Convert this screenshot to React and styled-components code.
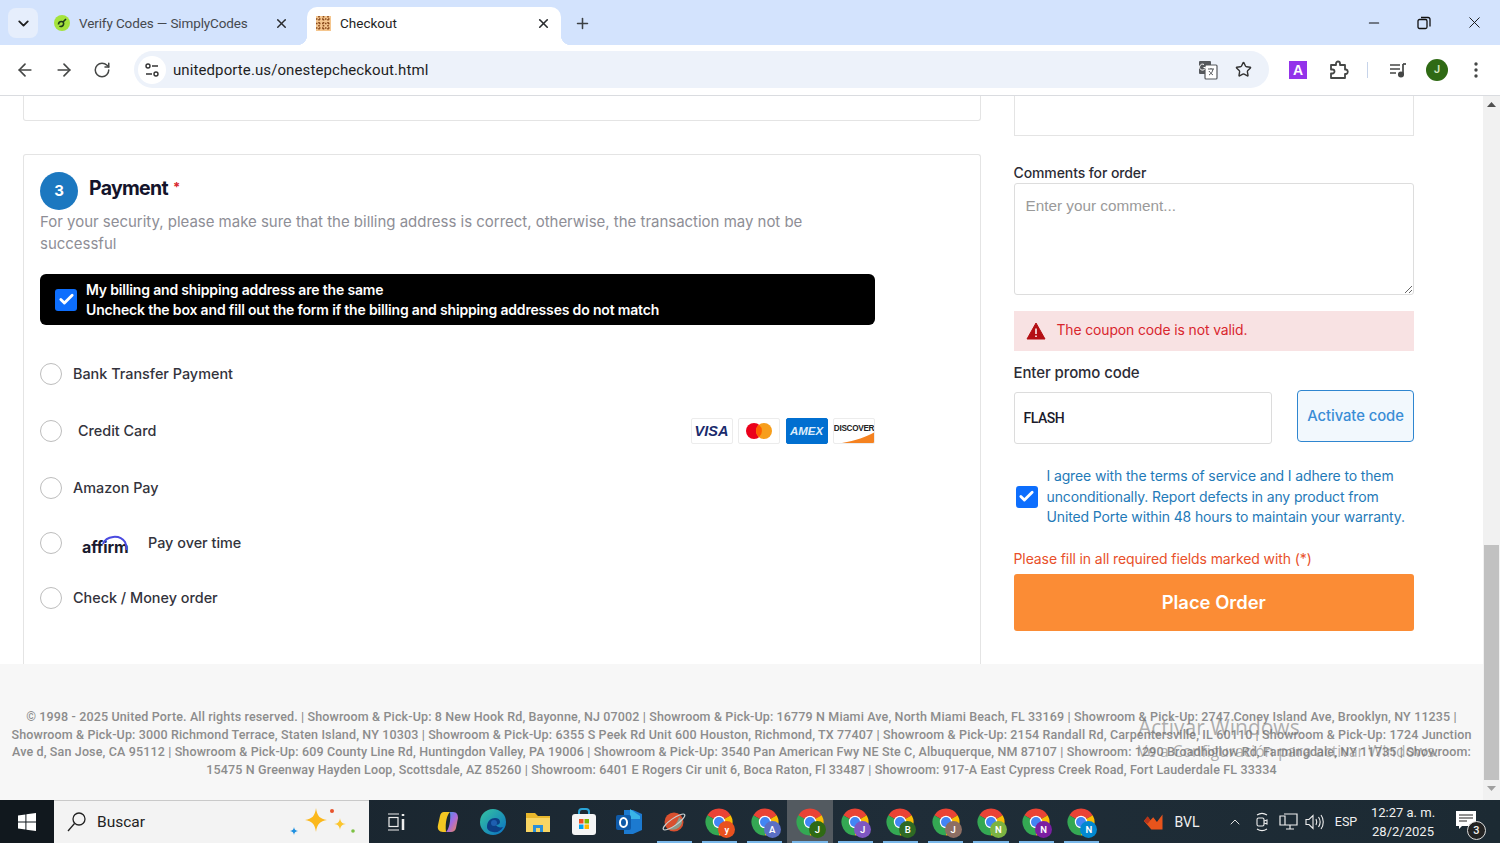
import React from "react";
import styled, { createGlobalStyle } from "styled-components";
import { ArrowLeft, ArrowRight, RotateCw, Star, X, Plus, ChevronDown, Minus, Check, ChevronUp } from "lucide-react";

const Global = createGlobalStyle`
  html, body { margin: 0; padding: 0; height: 100%; overflow: hidden; background: #fff; }
  body { font-family: "Inter", "Liberation Sans", sans-serif; }
  * { box-sizing: border-box; }
`;
const Screen = styled.div`width:1500px;height:843px;display:flex;flex-direction:column;position:relative;overflow:hidden;`;

/* ---- tab strip ---- */
const TabStrip = styled.div`height:45px;background:#d3e3fd;display:flex;align-items:flex-end;padding-left:8px;position:relative;flex:none;`;
const TabMenu = styled.div`width:30px;height:30px;border-radius:8px;background:#e6eefc;display:flex;align-items:center;justify-content:center;margin-bottom:7px;color:#1f1f1f;`;
const Tab = styled.div`
  height:38px;padding-bottom:6px;display:flex;align-items:center;flex:none;position:relative;width:${p=>p.$w}px;margin-left:${p=>p.$ml}px;padding-left:${p=>p.$pl}px;
  border-radius:10px 10px 0 0;background:${p=>p.$active?"#fff":"transparent"};color:${p=>p.$active?"#1f1f1f":"#45494f"};
  font:13.5px "Roboto","Liberation Sans",sans-serif;
  ${p=>p.$active?`
    &::before,&::after{content:"";position:absolute;bottom:0;width:10px;height:10px;}
    &::before{left:-10px;background:radial-gradient(circle at 0 0,transparent 10px,#fff 10.5px);}
    &::after{right:-10px;background:radial-gradient(circle at 100% 0,transparent 10px,#fff 10.5px);}
  `:""}
`;
const TabTitle = styled.span`flex:1;margin-left:${p=>p.$ml}px;white-space:nowrap;letter-spacing:${p=>p.$ls||0}px;`;
const TabClose = styled.span`display:flex;margin-right:${p=>p.$mr}px;color:#2a2c2f;`;
const NewTab = styled.div`display:flex;margin:0 0 13px 13px;color:#3c4043;`;
const WinControls = styled.div`margin-left:auto;display:flex;align-self:stretch;align-items:center;color:#111;`;
const WinBtn = styled.div`width:50.5px;display:flex;justify-content:center;`;

/* ---- toolbar ---- */
const Toolbar = styled.div`height:51px;background:#fff;border-radius:9px 9px 0 0;border-bottom:1px solid #dadce0;display:flex;align-items:center;padding:0 0 1px 15px;flex:none;color:#454746;`;
const NavBtn = styled.div`width:39px;display:flex;`;
const Omnibox = styled.div`height:37px;width:1135px;margin-left:2px;background:#edf2fa;border-radius:19px;display:flex;align-items:center;padding:0 17px 0 4px;`;
const SiteIcon = styled.div`width:28px;height:28px;border-radius:50%;background:#fff;display:flex;align-items:center;justify-content:center;`;
const Url = styled.span`margin-left:7px;padding-top:1px;font:15px "Roboto","Liberation Sans",sans-serif;color:#1f1f1f;flex:1;letter-spacing:.1px;`;
const OmniIcon = styled.div`display:flex;margin-left:${p=>p.$ml||0}px;`;
const ToolIcon = styled.div`display:flex;align-items:center;justify-content:center;width:${p=>p.$w}px;margin-left:${p=>p.$ml||0}px;`;
const Ext = styled.div`width:18px;height:18px;background:#9333ea;color:#fff;font:700 14px/18px "Liberation Sans",sans-serif;text-align:center;`;
const Sep = styled.div`width:1px;height:16px;background:#c7d4ea;flex:none;`;
const Avatar = styled.div`width:22px;height:22px;border-radius:50%;background:#2f6a14;color:#cfe5c0;font:600 11px/22px "Roboto",sans-serif;text-align:center;`;

/* ---- page ---- */
const Viewport = styled.div`height:704px;display:flex;flex:none;position:relative;`;
const Page = styled.div`flex:1;display:flex;flex-direction:column;min-width:0;`;
const Main = styled.div`height:568px;display:flex;padding-left:23px;background:#fff;`;
const LeftCol = styled.div`width:958px;display:flex;flex-direction:column;`;
const RightCol = styled.div`width:400.5px;margin-left:32.5px;display:flex;flex-direction:column;`;
const TopStub = styled.div`height:25px;border:1px solid #e4e4e4;border-top:none;border-radius:0 0 3px 3px;margin-bottom:33px;flex:none;`;
const Card = styled.div`flex:1;border:1px solid #e4e4e4;border-bottom:none;border-radius:3px 3px 0 0;padding:17px 16px 0;`;
const StepHead = styled.div`display:flex;align-items:flex-start;`;
const StepBadge = styled.div`width:38px;height:38px;border-radius:50%;background:#1c78c0;color:#fff;font:700 15px/38px "Inter",sans-serif;text-align:center;`;
const StepTitle = styled.h2`margin:1px 0 0 11px;font:700 19.5px/28px "Inter",sans-serif;color:#14142b;letter-spacing:-.7px;`;
const Req = styled.span`color:#d8262e;font-size:13px;margin-left:5px;vertical-align:3px;`;
const Hint = styled.p`margin:1px 0 0;width:800px;font:15px/22px "Inter",sans-serif;color:#8e8e96;letter-spacing:-.02px;`;
const BlackBox = styled.div`margin-top:19px;width:835px;height:51px;background:#000;border-radius:6px;display:flex;align-items:center;padding:0 0 0 15px;color:#fff;font:600 14px/20px "Inter",sans-serif;letter-spacing:-.17px;`;
const CheckBox = styled.span`width:22px;height:22px;flex:none;border-radius:3px;background:#0d6efd;display:flex;align-items:center;justify-content:center;color:#fff;`;
const BoxText = styled.div`margin-left:9px;`;
const Methods = styled.div`display:flex;flex-direction:column;margin-top:38px;`;
const Method = styled.div`display:flex;align-items:center;height:22px;margin-top:${p=>p.$mt||0}px;width:835px;font:500 14.4px/22px "Inter",sans-serif;color:#33333c;`;
const Radio = styled.span`width:22px;height:22px;border-radius:50%;border:1px solid #bdbdbd;background:#fff;flex:none;`;
const MethodLabel = styled.span`margin-left:${p=>p.$ml}px;position:relative;top:-.5px;`;
const AffirmLogo = styled.span`margin-left:20px;width:48px;height:22px;position:relative;display:block;`;
const AffirmWord = styled.span`position:absolute;left:0;bottom:-2px;font:700 16px/18px "Inter",sans-serif;color:#1a1a2e;letter-spacing:-.1px;`;
const AffirmArc = styled.svg`position:absolute;right:-1px;top:1px;`;
const Cards = styled.div`margin-left:auto;display:flex;gap:5.5px;`;
const PayCard = styled.div`
  width:42px;height:26px;border:1px solid ${p=>p.$bg?p.$bg:"#ececec"};border-radius:2px;background:${p=>p.$bg||"#fff"};
  display:flex;align-items:center;justify-content:center;position:relative;overflow:hidden;
`;
const VisaText = styled.span`font:italic 800 14.5px "Liberation Sans",sans-serif;color:#1a2a6c;`;
const AmexText = styled.span`font:italic 800 11.5px "Liberation Sans",sans-serif;color:#dcecfb;letter-spacing:0;`;
const DiscText = styled.span`font:700 8.2px "Liberation Sans",sans-serif;color:#222;position:relative;top:-3px;letter-spacing:-.3px;`;
const DiscSwoosh = styled.svg`position:absolute;left:0;bottom:0;`;

/* right col */
const RightStub = styled.div`height:40px;border:1px solid #e4e4e4;border-top:none;flex:none;`;
const Label = styled.label`display:block;font:500 ${p=>p.$fs}px/18px "Inter",sans-serif;color:#2c2c35;letter-spacing:${p=>p.$ls}px;margin-top:${p=>p.$mt}px;`;
const Comment = styled.textarea`
  display:block;margin-top:1px;width:400px;height:112px;border:1px solid #ddd;border-radius:3px;padding:13px 11px;font:15.3px "Liberation Sans",sans-serif;outline:none;
  &::placeholder{color:#9a9a9a;}
`;
const Alert = styled.div`margin-top:16px;height:40px;background:#f8e2e3;display:flex;align-items:center;padding-left:12px;color:#d8262e;font:13.9px "Inter",sans-serif;letter-spacing:-.1px;`;
const AlertText = styled.span`margin-left:11px;position:relative;top:-1px;`;
const PromoRow = styled.div`display:flex;justify-content:space-between;align-items:flex-start;margin-top:8px;`;
const PromoInput = styled.div`margin-top:2px;width:258px;height:52px;border:1px solid #dcdcdc;border-radius:3px;padding-left:9px;display:flex;align-items:center;font:500 14px "Roboto",sans-serif;color:#1b1b2b;letter-spacing:-.5px;`;
const ActivateBtn = styled.div`width:117px;height:52px;border:1px solid #2f86d0;border-radius:4px;background:#f2f8fd;color:#3a8dd6;font:500 14.8px/50px "Inter",sans-serif;text-align:center;letter-spacing:-.05px;white-space:nowrap;`;
const Terms = styled.div`margin-top:22px;display:flex;align-items:center;padding-left:2px;color:#1f7ab8;font:14px/20.5px "Inter",sans-serif;letter-spacing:-.13px;`;
const TermsText = styled.div`margin-left:9px;white-space:nowrap;`;
const Required = styled.div`margin-top:22px;color:#e8502a;font:14px/18px "Inter",sans-serif;letter-spacing:-.1px;`;
const PlaceOrder = styled.div`margin-top:6px;height:57px;border-radius:3px;background:#fb8c35;color:#fff;font:600 18.4px/57px "Inter",sans-serif;text-align:center;`;

/* footer */
const Footer = styled.footer`height:136px;background:#f7f7f7;padding-top:44px;text-align:center;color:#8c8c8c;font:500 12.5px/17.5px "Roboto","Liberation Sans",sans-serif;letter-spacing:.14px;`;
const FooterLine = styled.div`white-space:nowrap;`;
const Watermark = styled.div`position:absolute;left:1138px;top:617px;color:rgba(110,110,110,.55);font:21px "Open Sans",sans-serif;pointer-events:none;`;
const WatermarkSub = styled.div`font-size:15.6px;margin-top:-1px;`;

/* scrollbar */
const Scrollbar = styled.div`width:17px;background:#f1f1f1;display:flex;flex-direction:column;align-items:stretch;flex:none;`;
const ScrollArrow = styled.div`height:17px;display:flex;align-items:center;justify-content:center;`;
const ScrollGap = styled.div`height:432px;`;
const ScrollThumb = styled.div`height:235px;background:#c1c1c1;margin:0 1px;`;

/* taskbar */
const Taskbar = styled.div`height:43px;background:linear-gradient(90deg,#17222b,#1f2d38 60%,#1c2a33);display:flex;align-items:stretch;flex:none;color:#eee;`;
const StartBtn = styled.div`width:54px;display:flex;align-items:center;justify-content:center;background:#11181e;`;
const SearchBox = styled.div`width:315px;background:#f3f3f3;border-top:1px solid #c9c9c9;display:flex;align-items:center;padding-left:13px;color:#222;font:15.5px "Roboto",sans-serif;position:relative;`;
const SearchText = styled.span`margin-left:10px;`;
const SearchDeco = styled.svg`position:absolute;right:8px;top:4px;`;
const TaskIcons = styled.div`display:flex;margin-left:5px;`;
const TaskItem = styled.div`
  width:45.25px;display:flex;align-items:center;justify-content:center;position:relative;margin-right:${p=>p.$mr||0}px;
  background:${p=>p.$active?"#535a60":"transparent"};
  &::after{content:"";position:absolute;left:5px;right:5px;bottom:0;height:2px;background:${p=>p.$run?"#7ab8ea":"transparent"};}
`;
const ChromeWrap = styled.div`width:28px;height:28px;position:relative;`;
const ChromeBadge = styled.span`position:absolute;right:-2px;bottom:-2px;width:17px;height:17px;border-radius:50%;background:${p=>p.$bg};color:#fff;font:600 9.5px/17px "Roboto",sans-serif;text-align:center;`;
const Tray = styled.div`margin-left:auto;display:flex;align-items:center;font:14px "Roboto",sans-serif;color:#f0f0f0;`;
const TrayItem = styled.div`display:flex;align-items:center;justify-content:center;width:${p=>p.$w}px;margin-left:${p=>p.$ml||0}px;font-size:${p=>p.$fs||14}px;`;
const Clock = styled.div`text-align:center;font:13px/19px "Roboto",sans-serif;width:72px;margin-left:6px;`;
const Notif = styled.div`position:relative;width:26px;height:24px;margin-left:17px;margin-right:18px;`;
const NotifBadge = styled.span`position:absolute;right:-4px;bottom:-6px;width:19px;height:19px;border-radius:50%;border:1px solid #ddd;background:#222;color:#eee;font:500 11px/17px "Roboto",sans-serif;text-align:center;`;

const Tick = () => <Check size={17} strokeWidth={4} />;

const Chrome = ({ badge, bg }) => (
  <ChromeWrap>
    <svg width="28" height="28" viewBox="0 0 28 28" fill="none" strokeWidth="8">
      <path d="M5.770 9.250A9.500 9.500 0 0 1 22.230 9.250" stroke="#ea4335" />
      <path d="M22.230 9.250A9.500 9.500 0 0 1 14 23.500" stroke="#fbbc04" />
      <path d="M14 23.500A9.500 9.500 0 0 1 5.770 9.250" stroke="#34a853" />
      <circle cx="14" cy="14" r="6.200" fill="#fff" stroke="none" />
      <circle cx="14" cy="14" r="5" fill="#4285f4" stroke="none" />
    </svg>
    <ChromeBadge $bg={bg}>{badge}</ChromeBadge>
  </ChromeWrap>
);

const chromes = [
  ["y", "#e8511f"], ["A", "#5b6fc4"], ["J", "#2f6a14"], ["J", "#7e57c2"], ["B", "#2f6a24"],
  ["J", "#8d6e63"], ["N", "#7cb342"], ["N", "#7b1fa2"], ["N", "#0288d1"],
];

export default function App() {
  return (
    <Screen>
      <Global />
      <TabStrip>
        <TabMenu><ChevronDown size={17} strokeWidth={2.6} /></TabMenu>
        <Tab $w={276} $ml={0} $pl={16}>
          <svg width="16" height="16" viewBox="0 0 16 16"><circle cx="8" cy="8" r="8" fill="#a4e33c" /><path d="M4.500 9.500c0-2 1.500-3 3-3s2.500 1 2 3-3 2.500-4 1.500M9 7l3-3" fill="none" stroke="#1e3a1a" strokeWidth="1.600" /></svg>
          <TabTitle $ml={9} $ls={-0.12}>Verify Codes — SimplyCodes</TabTitle>
          <TabClose $mr={25}><X size={15} strokeWidth={2.4} /></TabClose>
        </Tab>
        <Tab $w={254} $ml={-7} $pl={9} $active>
          <svg width="15" height="15" viewBox="0 0 15 15"><rect width="15" height="15" fill="#f5c68e" /><path d="M3 0v15M7.500 0v15M12 0v15M0 3h15M0 7.500h15M0 12h15" stroke="#8a4a1c" strokeWidth="1.600" strokeDasharray="1.500 1.500" /></svg>
          <TabTitle $ml={9}>Checkout</TabTitle>
          <TabClose $mr={10}><X size={15} strokeWidth={2.6} /></TabClose>
        </Tab>
        <NewTab><Plus size={17} strokeWidth={2.2} /></NewTab>
        <WinControls>
          <WinBtn><Minus size={16} strokeWidth={1.6} /></WinBtn>
          <WinBtn>
            <svg width="14" height="14" viewBox="0 0 14 14" fill="none" stroke="#111" strokeWidth="1.300"><rect x="1" y="3.500" width="9" height="9" rx="1.500" /><path d="M4 1.500h7a2 2 0 0 1 2 2v7" /></svg>
          </WinBtn>
          <WinBtn><X size={19} strokeWidth={1.2} /></WinBtn>
        </WinControls>
      </TabStrip>

      <Toolbar>
        <NavBtn><ArrowLeft size={20} strokeWidth={2} /></NavBtn>
        <NavBtn><ArrowRight size={20} strokeWidth={2} /></NavBtn>
        <NavBtn><RotateCw size={18} strokeWidth={2} /></NavBtn>
        <Omnibox>
          <SiteIcon>
            <svg width="16" height="16" viewBox="0 0 16 16" fill="none" stroke="#333" strokeWidth="1.400"><circle cx="4" cy="4" r="2" /><path d="M8 4h6M2 12h6" /><circle cx="12" cy="12" r="2" /></svg>
          </SiteIcon>
          <Url>unitedporte.us/onestepcheckout.html</Url>
          <OmniIcon>
            <svg width="20" height="20" viewBox="0 0 20 20"><rect x="1" y="1" width="12" height="13" rx="1" fill="#55585c" /><rect x="7" y="5" width="12" height="14" rx="1" fill="#fff" stroke="#55585c" strokeWidth="1.200" /><path d="M10 9h6M13 8v1M15 9c-.5 3-2 5-4 6M11 11c1 2 3 3 4 4" stroke="#55585c" strokeWidth="1" fill="none" /><path d="M6 4.500a3 3 0 1 0 1.500 3H5.500" stroke="#fff" fill="none" strokeWidth="1" /></svg>
          </OmniIcon>
          <OmniIcon $ml={17}><Star size={17} strokeWidth={2} color="#333" /></OmniIcon>
        </Omnibox>
        <ToolIcon $w={18} $ml={20}><Ext>A</Ext></ToolIcon>
        <ToolIcon $w={22} $ml={21}>
          <svg width="22" height="22" viewBox="0 0 22 22" fill="none" stroke="#454746" strokeWidth="1.800" strokeLinejoin="round"><path d="M3 6h5V4.500a2 2 0 0 1 4 0V6h5v4.500h1a2.300 2.300 0 0 1 0 4.500h-1v4H3v-4.500h1.500a2 2 0 0 0 0-4H3z" /></svg>
        </ToolIcon>
        <ToolIcon $w={1} $ml={17}><Sep /></ToolIcon>
        <ToolIcon $w={20} $ml={20}>
          <svg width="20" height="20" viewBox="0 0 20 20" fill="none" stroke="#454746" strokeWidth="1.700"><path d="M2 5h10M2 9h10M2 13h6M15 4v10" /><path d="M15 4h3" /><circle cx="13" cy="14.500" r="2.200" fill="#454746" /></svg>
        </ToolIcon>
        <ToolIcon $w={22} $ml={18}><Avatar>J</Avatar></ToolIcon>
        <ToolIcon $w={20} $ml={18}>
          <svg width="4" height="16" viewBox="0 0 4 16" fill="#454746"><circle cx="2" cy="2" r="1.700" /><circle cx="2" cy="8" r="1.700" /><circle cx="2" cy="14" r="1.700" /></svg>
        </ToolIcon>
      </Toolbar>

      <Viewport>
        <Page>
          <Main>
            <LeftCol>
              <TopStub />
              <Card>
                <StepHead>
                  <StepBadge>3</StepBadge>
                  <StepTitle>Payment<Req>*</Req></StepTitle>
                </StepHead>
                <Hint>For your security, please make sure that the billing address is correct, otherwise, the transaction may not be successful</Hint>
                <BlackBox>
                  <CheckBox><Tick /></CheckBox>
                  <BoxText>
                    My billing and shipping address are the same<br />
                    Uncheck the box and fill out the form if the billing and shipping addresses do not match
                  </BoxText>
                </BlackBox>
                <Methods>
                  <Method><Radio /><MethodLabel $ml={11}>Bank Transfer Payment</MethodLabel></Method>
                  <Method $mt={35}>
                    <Radio /><MethodLabel $ml={16}>Credit Card</MethodLabel>
                    <Cards>
                      <PayCard><VisaText>VISA</VisaText></PayCard>
                      <PayCard>
                        <svg width="28" height="18" viewBox="0 0 28 18"><circle cx="9" cy="9" r="8" fill="#eb001b" /><circle cx="19" cy="9" r="8" fill="#f79e1b" /><path d="M14 2.800a8 8 0 0 1 0 12.400 8 8 0 0 1 0-12.400z" fill="#ff5f00" /></svg>
                      </PayCard>
                      <PayCard $bg="#016fd0"><AmexText>AMEX</AmexText></PayCard>
                      <PayCard>
                        <DiscText>DISCOVER</DiscText>
                        <DiscSwoosh width="41" height="12" viewBox="0 0 41 12"><path d="M8 12C22 10 34 5 41 1v11z" fill="#f58220" /></DiscSwoosh>
                      </PayCard>
                    </Cards>
                  </Method>
                  <Method $mt={35}><Radio /><MethodLabel $ml={11}>Amazon Pay</MethodLabel></Method>
                  <Method $mt={33}>
                    <Radio />
                    <AffirmLogo>
                      <AffirmWord>affirm</AffirmWord>
                      <AffirmArc width="32" height="20" viewBox="0 0 32 20"><path d="M4 11A12 10 0 0 1 26 9c1 2 1.500 4 1.500 8" fill="none" stroke="#4a4ae0" strokeWidth="2" /></AffirmArc>
                    </AffirmLogo>
                    <MethodLabel $ml={18}>Pay over time</MethodLabel>
                  </Method>
                  <Method $mt={33}><Radio /><MethodLabel $ml={11}>Check / Money order</MethodLabel></Method>
                </Methods>
              </Card>
            </LeftCol>
            <RightCol>
              <RightStub />
              <Label $mt={28} $fs={14} $ls={-0.1}>Comments for order</Label>
              <Comment placeholder="Enter your comment..." />
              <Alert>
                <svg width="20" height="18" viewBox="0 0 20 18"><path d="M10 1 19 17H1z" fill="#b40f14" stroke="#b40f14" strokeLinejoin="round" /><path d="M10 6.500v5.500M10 13.500v1.500" stroke="#fff" strokeWidth="1.500" /></svg>
                <AlertText>The coupon code is not valid.</AlertText>
              </Alert>
              <Label $mt={13} $fs={15} $ls={-0.1}>Enter promo code</Label>
              <PromoRow>
                <PromoInput>FLASH</PromoInput>
                <ActivateBtn>Activate code</ActivateBtn>
              </PromoRow>
              <Terms>
                <CheckBox><Tick /></CheckBox>
                <TermsText>
                  I agree with the terms of service and I adhere to them<br />
                  unconditionally. Report defects in any product from<br />
                  United Porte within 48 hours to maintain your warranty.
                </TermsText>
              </Terms>
              <Required>Please fill in all required fields marked with (*)</Required>
              <PlaceOrder>Place Order</PlaceOrder>
            </RightCol>
          </Main>
          <Footer>
            <FooterLine>© 1998 - 2025 United Porte. All rights reserved. | Showroom &amp; Pick-Up: 8 New Hook Rd, Bayonne, NJ 07002 | Showroom &amp; Pick-Up: 16779 N Miami Ave, North Miami Beach, FL 33169 | Showroom &amp; Pick-Up: 2747 Coney Island Ave, Brooklyn, NY 11235 |</FooterLine>
            <FooterLine>Showroom &amp; Pick-Up: 3000 Richmond Terrace, Staten Island, NY 10303 | Showroom &amp; Pick-Up: 6355 S Peek Rd Unit 600 Houston, Richmond, TX 77407 | Showroom &amp; Pick-Up: 2154 Randall Rd, Carpentersville, IL 60110 | Showroom &amp; Pick-Up: 1724 Junction</FooterLine>
            <FooterLine>Ave d, San Jose, CA 95112 | Showroom &amp; Pick-Up: 609 County Line Rd, Huntingdon Valley, PA 19006 | Showroom &amp; Pick-Up: 3540 Pan American Fwy NE Ste C, Albuquerque, NM 87107 | Showroom: 1290 Broadhollow Rd, Farmingdale, NY 11735 | Showroom:</FooterLine>
            <FooterLine>15475 N Greenway Hayden Loop, Scottsdale, AZ 85260 | Showroom: 6401 E Rogers Cir unit 6, Boca Raton, Fl 33487 | Showroom: 917-A East Cypress Creek Road, Fort Lauderdale FL 33334</FooterLine>
          </Footer>
          <Watermark>Activar Windows<WatermarkSub>Ve a Configuración para activar Windows.</WatermarkSub></Watermark>
        </Page>
        <Scrollbar>
          <ScrollArrow><svg width="9" height="5" viewBox="0 0 9 5"><path d="M4.500 0 9 5H0z" fill="#505050" /></svg></ScrollArrow>
          <ScrollGap />
          <ScrollThumb />
          <ScrollArrow><svg width="9" height="5" viewBox="0 0 9 5"><path d="M0 0h9L4.500 5z" fill="#a0a0a0" /></svg></ScrollArrow>
        </Scrollbar>
      </Viewport>

      <Taskbar>
        <StartBtn>
          <svg width="18" height="18" viewBox="0 0 18 18" fill="#fff"><path d="M0 2.600 7.400 1.500v7H0zM8.400 1.300 18 0v8.500H8.400zM0 9.500h7.400v7L0 15.400zM8.400 9.500H18V18l-9.600-1.300z" /></svg>
        </StartBtn>
        <SearchBox>
          <svg width="20" height="22" viewBox="0 0 20 22" fill="none" stroke="#222" strokeWidth="1.300"><circle cx="12" cy="8" r="6" /><path d="M7.500 12.500 1 20" /></svg>
          <SearchText>Buscar</SearchText>
          <SearchDeco width="72" height="36" viewBox="0 0 72 36">
            <path d="M27 3c1 8 4 11 11 12-7 1-10 4-11 12-1-8-4-11-11-12 7-1 10-4 11-12z" fill="#fbb81c" />
            <path d="M51 13c.5 4 2 5.500 6 6-4 .5-5.500 2-6 6-.5-4-2-5.500-6-6 4-.5 5.500-2 6-6z" fill="#fbc52e" />
            <path d="M5 22c.3 2.500 1.300 3.500 4 4-2.700.5-3.700 1.500-4 4-.3-2.500-1.300-3.500-4-4 2.700-.5 3.700-1.500 4-4z" fill="#1e90e0" />
            <circle cx="43" cy="6" r="2" fill="#e8532c" /><circle cx="64" cy="26" r="1.800" fill="#7cc142" />
          </SearchDeco>
        </SearchBox>
        <TaskIcons>
          <TaskItem $mr={6}>
            <svg width="20" height="20" viewBox="0 0 20 20" fill="none" stroke="#eee" strokeWidth="1.200"><path d="M1 2h11M1 18h11" /><rect x="2" y="5.500" width="9" height="9" /><path d="M16 2v2M16 7v11" strokeWidth="2.500" /></svg>
          </TaskItem>
          <TaskItem>
            <svg width="26" height="26" viewBox="0 0 26 26"><defs><linearGradient id="cp" x1="0" y1="0" x2="1" y2="1"><stop offset="0" stopColor="#2f9ee8" /><stop offset=".5" stopColor="#a56ae0" /><stop offset="1" stopColor="#f28a4a" /></linearGradient></defs><path d="M9 3h6c-3 3-5 10-4 20H8c-4 0-6-3-5-7l2-9c.5-2.500 2-4 4-4z" fill="#f3c622" /><path d="M15 3h3c4 0 5 3 5 6l-2 10c-.5 2.500-2.500 4-5 4h-5c3-3 5-11 4-20z" fill="url(#cp)" /></svg>
          </TaskItem>
          <TaskItem>
            <svg width="28" height="28" viewBox="0 0 28 28"><defs><linearGradient id="ed" x1="0" y1="0" x2="1" y2="1"><stop offset="0" stopColor="#36c5a0" /><stop offset="1" stopColor="#0a6fc4" /></linearGradient></defs><circle cx="14" cy="14" r="13" fill="url(#ed)" /><path d="M8 19c0-6 4-9 8-9 3 0 5 1.500 5 4 0 2-2 3-4 3 1 2 4 3 7 2-2 4-6 6-10 5-3-.5-6-2-6-5z" fill="#0c3f86" /><circle cx="15" cy="15" r="3" fill="#1e5fb0" /></svg>
          </TaskItem>
          <TaskItem>
            <svg width="26" height="24" viewBox="0 0 26 24"><path d="M1 3h9l3 3h12v15H1z" fill="#e8b72c" /><path d="M1 8h24v14H1z" fill="#f8d563" /><rect x="8" y="15" width="10" height="7" fill="#2a8fd8" /><rect x="11" y="18" width="4" height="4" fill="#f8d563" /></svg>
          </TaskItem>
          <TaskItem>
            <svg width="26" height="28" viewBox="0 0 26 28"><path d="M8 7V4a3 3 0 0 1 3-3h4a3 3 0 0 1 3 3v3" fill="none" stroke="#2aa5d8" strokeWidth="2" /><rect x="1" y="6" width="24" height="21" rx="3" fill="#f5f5f5" /><rect x="8" y="11" width="4.500" height="4.500" fill="#f25022" /><rect x="13.500" y="11" width="4.500" height="4.500" fill="#7fba00" /><rect x="8" y="16.500" width="4.500" height="4.500" fill="#00a4ef" /><rect x="13.500" y="16.500" width="4.500" height="4.500" fill="#ffb900" /></svg>
          </TaskItem>
          <TaskItem>
            <svg width="28" height="28" viewBox="0 0 28 28"><path d="M9 2h9l9 4v16l-9 4H9z" fill="#1c7ad0" /><path d="M15 1 25 8v3H15z" fill="#39b4e8" /><rect x="1" y="7" width="15" height="15" rx="2" fill="#0f5aa8" /><ellipse cx="8.500" cy="14.500" rx="3.500" ry="4.500" fill="none" stroke="#fff" strokeWidth="2" /></svg>
          </TaskItem>
          <TaskItem $run>
            <svg width="26" height="26" viewBox="0 0 26 26"><circle cx="13" cy="13" r="9.500" fill="#d9502f" /><path d="M7 20c5-1 9-5 11-12 2 1 3 4 3 6-2 5-6 8-14 6z" fill="#8a9a8a" /><ellipse cx="13" cy="13" rx="13" ry="3.500" transform="rotate(-35 13 13)" fill="none" stroke="#c9cfd0" strokeWidth="1.200" /></svg>
          </TaskItem>
          {chromes.map(([b, c], i) => (
            <TaskItem key={i} $run $active={i === 2}><Chrome badge={b} bg={c} /></TaskItem>
          ))}
        </TaskIcons>
        <Tray>
          <TrayItem $w={26}>
            <svg width="28" height="20" viewBox="0 0 28 20"><path d="M1 9 5 4l3 4 3-3 4 5 6-8v16H9z" fill="#e8541c" /><path d="M1 9l4-5 3 4-3 4z" fill="#b5341a" /></svg>
          </TrayItem>
          <TrayItem $w={36} $ml={0}>BVL</TrayItem>
          <TrayItem $w={16} $ml={22}><ChevronUp size={18} strokeWidth={1.4} /></TrayItem>
          <TrayItem $w={16} $ml={11}>
            <svg width="14" height="20" viewBox="0 0 14 20" fill="none" stroke="#eee" strokeWidth="1.100"><rect x="2" y="6" width="7" height="8" rx="1.500" /><path d="M9 9l3-1v4l-3-1M2 3c3-2 7-2 10 0M2 17c3 2 7 2 10 0" /></svg>
          </TrayItem>
          <TrayItem $w={20} $ml={8}>
            <svg width="19" height="18" viewBox="0 0 19 18" fill="none" stroke="#eee" strokeWidth="1.200"><path d="M5 1h13v11H5M1 3h5v9H1zM11 12v4M7 16h8" /></svg>
          </TrayItem>
          <TrayItem $w={20} $ml={6}>
            <svg width="19" height="18" viewBox="0 0 19 18" fill="none" stroke="#eee" strokeWidth="1.100"><path d="M1 6.500h3l4-4v13l-4-4H1zM11 6c1 2 1 4 0 6M13.500 4c2 3 2 7 0 10M16 2c3 4 3 10 0 14" /></svg>
          </TrayItem>
          <TrayItem $w={30} $ml={7} $fs={12.5}>ESP</TrayItem>
          <Clock>12:27 a. m.<br />28/2/2025</Clock>
          <Notif>
            <svg width="20" height="20" viewBox="0 0 20 20" fill="#fff"><path d="M0 1h20v15H6l-3 3v-3H0z" /><path d="M3 5h14M3 8h14M3 11h8" stroke="#222" strokeWidth="1.200" /></svg>
            <NotifBadge>3</NotifBadge>
          </Notif>
        </Tray>
      </Taskbar>
    </Screen>
  );
}
